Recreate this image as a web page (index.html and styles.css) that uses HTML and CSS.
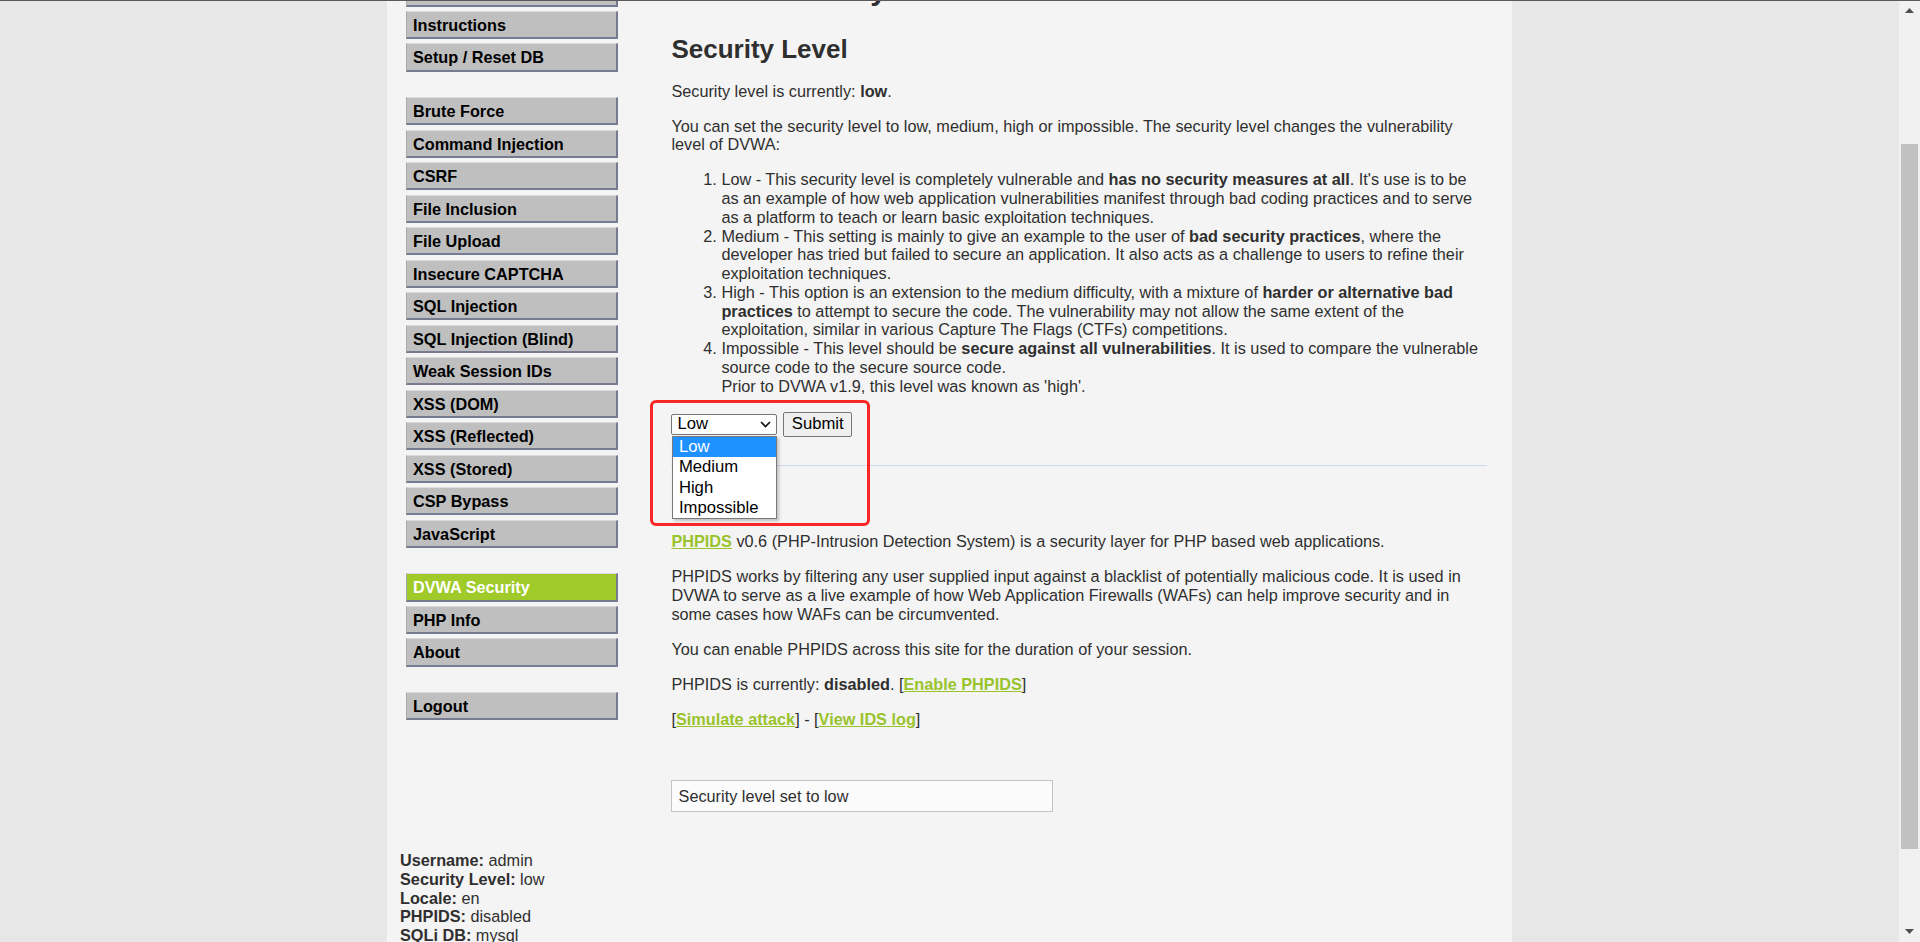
FILE: index.html
```html
<!DOCTYPE html>
<html lang="en">
<head>
<meta charset="utf-8">
<title>DVWA Security</title>
<link rel="stylesheet" href="styles.css">
</head>
<body>
<div class="topline"></div>
<div class="viewport">
  <div class="page">
    <div class="container">
      <div class="columns">
        <nav class="sidebar">
          <ul class="menu-group">
            <li class="menu-item">Home</li>
            <li class="menu-item">Instructions</li>
            <li class="menu-item">Setup / Reset DB</li>
          </ul>
          <ul class="menu-group">
            <li class="menu-item">Brute Force</li>
            <li class="menu-item">Command Injection</li>
            <li class="menu-item">CSRF</li>
            <li class="menu-item">File Inclusion</li>
            <li class="menu-item">File Upload</li>
            <li class="menu-item">Insecure CAPTCHA</li>
            <li class="menu-item">SQL Injection</li>
            <li class="menu-item">SQL Injection (Blind)</li>
            <li class="menu-item">Weak Session IDs</li>
            <li class="menu-item">XSS (DOM)</li>
            <li class="menu-item">XSS (Reflected)</li>
            <li class="menu-item">XSS (Stored)</li>
            <li class="menu-item">CSP Bypass</li>
            <li class="menu-item">JavaScript</li>
          </ul>
          <ul class="menu-group">
            <li class="menu-item selected">DVWA Security</li>
            <li class="menu-item">PHP Info</li>
            <li class="menu-item">About</li>
          </ul>
          <ul class="menu-group">
            <li class="menu-item">Logout</li>
          </ul>
        </nav>
        <main class="main">
          <h1 class="page-title">DVWA Security</h1>
          <h2 class="section-title level-title">Security Level</h2>
          <p class="text">Security level is currently: <b>low</b>.</p>
          <p class="text">You can set the security level to low, medium, high or impossible. The security level changes the vulnerability level of DVWA:</p>
          <ol class="levels">
            <li>Low - This security level is completely vulnerable and <b>has no security measures at all</b>. It's use is to be as an example of how web application vulnerabilities manifest through bad coding practices and to serve as a platform to teach or learn basic exploitation techniques.</li>
            <li>Medium - This setting is mainly to give an example to the user of <b>bad security practices</b>, where the developer has tried but failed to secure an application. It also acts as a challenge to users to refine their exploitation techniques.</li>
            <li>High - This option is an extension to the medium difficulty, with a mixture of <b>harder or alternative bad practices</b> to attempt to secure the code. The vulnerability may not allow the same extent of the exploitation, similar in various Capture The Flags (CTFs) competitions.</li>
            <li>Impossible - This level should be <b>secure against all vulnerabilities</b>. It is used to compare the vulnerable source code to the secure source code.<br>Prior to DVWA v1.9, this level was known as 'high'.</li>
          </ol>
          <form class="level-form">
            <div class="select-wrap">
              <div class="select">
                <span>Low</span>
                <svg class="chevron" width="11" height="7" viewBox="0 0 11 7"><path d="M1 1 L5.5 5.5 L10 1" fill="none" stroke="#111" stroke-width="1.7"/></svg>
              </div>
              <ul class="dropdown">
                <li class="option active">Low</li>
                <li class="option">Medium</li>
                <li class="option">High</li>
                <li class="option">Impossible</li>
              </ul>
              <div class="annotation"></div>
            </div>
            <div class="submit">Submit</div>
          </form>
          <div class="divider"></div>
          <h2 class="section-title ids-title">PHPIDS</h2>
          <p class="text"><a class="link">PHPIDS</a> v0.6 (PHP-Intrusion Detection System) is a security layer for PHP based web applications.</p>
          <p class="text">PHPIDS works by filtering any user supplied input against a blacklist of potentially malicious code. It is used in DVWA to serve as a live example of how Web Application Firewalls (WAFs) can help improve security and in some cases how WAFs can be circumvented.</p>
          <p class="text">You can enable PHPIDS across this site for the duration of your session.</p>
          <p class="text">PHPIDS is currently: <b>disabled</b>. [<a class="link">Enable PHPIDS</a>]</p>
          <p class="text">[<a class="link">Simulate attack</a>] - [<a class="link">View IDS log</a>]</p>
          <div class="message">Security level set to low</div>
        </main>
      </div>
      <div class="system-info">
        <div><b>Username:</b> admin</div>
        <div><b>Security Level:</b> low</div>
        <div><b>Locale:</b> en</div>
        <div><b>PHPIDS:</b> disabled</div>
        <div><b>SQLi DB:</b> mysql</div>
      </div>
    </div>
  </div>
  <div class="scrollbar">
    <div class="sb-btn"><svg width="9" height="5" viewBox="0 0 9 5"><polygon points="0,5 4.5,0 9,5" fill="#505050"/></svg></div>
    <div class="sb-track"><div class="sb-thumb"></div></div>
    <div class="sb-btn"><svg width="9" height="5" viewBox="0 0 9 5"><polygon points="0,0 9,0 4.5,5" fill="#505050"/></svg></div>
  </div>
</div>
</body>
</html>
```
FILE: styles.css
```css
* { box-sizing: border-box; }

html, body {
  margin: 0;
  padding: 0;
  height: 100%;
  overflow: hidden;
}

body {
  background: #e7e7e7;
  font-family: "Liberation Sans", Arial, Helvetica, sans-serif;
  font-size: 16.25px;
  line-height: 18.75px;
  color: #2f2f2f;
}

.topline {
  position: fixed;
  top: 0;
  left: 0;
  right: 0;
  height: 1px;
  background: #5a5a5a;
  z-index: 20;
}

.viewport {
  display: flex;
  height: 942px;
}

.page {
  flex: 1;
  overflow: hidden;
  background: #e7e7e7;
}

.container {
  display: flow-root;
  width: 1125px;
  margin: 0 auto;
  background: #f4f4f4;
  min-height: 100%;
}

.columns {
  display: flex;
  align-items: flex-start;
  margin-top: -30px;
}

/* ---------- sidebar ---------- */
.sidebar {
  flex-shrink: 0;
  width: 231px;
  padding: 8.25px 0 0 19px;
}

.menu-group {
  list-style: none;
  margin: 0;
  padding: 0 0 21.25px;
}

.menu-item {
  width: 212px;
  height: 28.25px;
  margin-bottom: 4.25px;
  padding: 4px 0 0 6px;
  background: #bfbfbf;
  border-style: solid;
  border-width: 1px 2px 2px 1px;
  border-color: #dcdcdc #777b8f #777b8f #a9a9a9;
  color: #000;
  font-weight: bold;
  white-space: nowrap;
}

.menu-item.selected {
  background: #9fca2a;
  color: #fff;
}

/* ---------- main ---------- */
.main {
  flex-shrink: 0;
  width: 815.3px;
  margin-left: 53.4px;
  padding-top: 3.1px;
  display: flex;
  flex-direction: column;
  align-items: flex-start;
}

.page-title {
  margin: 0;
  font-size: 30px;
  line-height: 34.5px;
  font-weight: bold;
}

.section-title {
  margin: 0;
  font-size: 26px;
  line-height: 30px;
  font-weight: bold;
}

.level-title {
  margin: 26.7px 0 17.45px;
}

.ids-title {
  margin: 18px 0 18px;
}

.text {
  margin: 0 0 16.25px;
}

.levels {
  margin: 0 0 16.25px;
  padding-left: 50px;
}

.level-form {
  display: flex;
  align-items: center;
  gap: 5.7px;
  height: 25.4px;
  margin: 0;
}

.select-wrap {
  position: relative;
}

.select {
  display: flex;
  align-items: center;
  justify-content: space-between;
  width: 106px;
  height: 21px;
  padding: 0 5px 0 5px;
  background: #fff;
  border: 1px solid #767676;
  border-radius: 2px;
  font-size: 16.67px;
  color: #000;
}

.chevron {
  display: block;
}

.dropdown {
  position: absolute;
  left: 1px;
  top: 22px;
  width: 105px;
  margin: 0;
  padding: 0;
  list-style: none;
  background: #fff;
  border: 1px solid #7a7a7a;
  box-shadow: 2px 2px 3px rgba(0, 0, 0, 0.22);
  z-index: 5;
}

.option {
  height: 20.3px;
  line-height: 20.3px;
  padding-left: 5.5px;
  font-size: 16.67px;
  color: #000;
}

.option.active {
  background: #1e90ff;
  color: #fff;
}

.annotation {
  position: absolute;
  left: -21.4px;
  top: -14px;
  width: 219.6px;
  height: 126px;
  border: 3px solid #fa2525;
  border-radius: 6px;
  z-index: 6;
  pointer-events: none;
}

.submit {
  width: 69.3px;
  height: 25.4px;
  display: flex;
  align-items: center;
  justify-content: center;
  background: #efefef;
  border: 1px solid #767676;
  border-radius: 2px;
  font-size: 16.67px;
  color: #000;
}

.divider {
  align-self: stretch;
  height: 1px;
  margin-top: 28px;
  background: #cfd9f2;
}

.link {
  color: #99c32c;
  font-weight: bold;
  text-decoration: underline;
}

.message {
  width: 381.5px;
  margin-top: 35.5px;
  padding: 5.8px 6.2px;
  background: #fbfbfb;
  border: 1px solid #c4c4c4;
}

/* ---------- system info ---------- */
.system-info {
  margin-top: 38.6px;
  padding-left: 13px;
}

/* ---------- scrollbar ---------- */
.scrollbar {
  flex-shrink: 0;
  width: 21px;
  display: flex;
  flex-direction: column;
  background: #f1f1f1;
}

.sb-btn {
  height: 21px;
  display: flex;
  align-items: center;
  justify-content: center;
}

.sb-btn svg { display: block; }

.sb-track {
  flex: 1;
  padding-top: 123px;
}

.sb-thumb {
  height: 705px;
  margin: 0 2px;
  background: #c1c1c1;
}
```
